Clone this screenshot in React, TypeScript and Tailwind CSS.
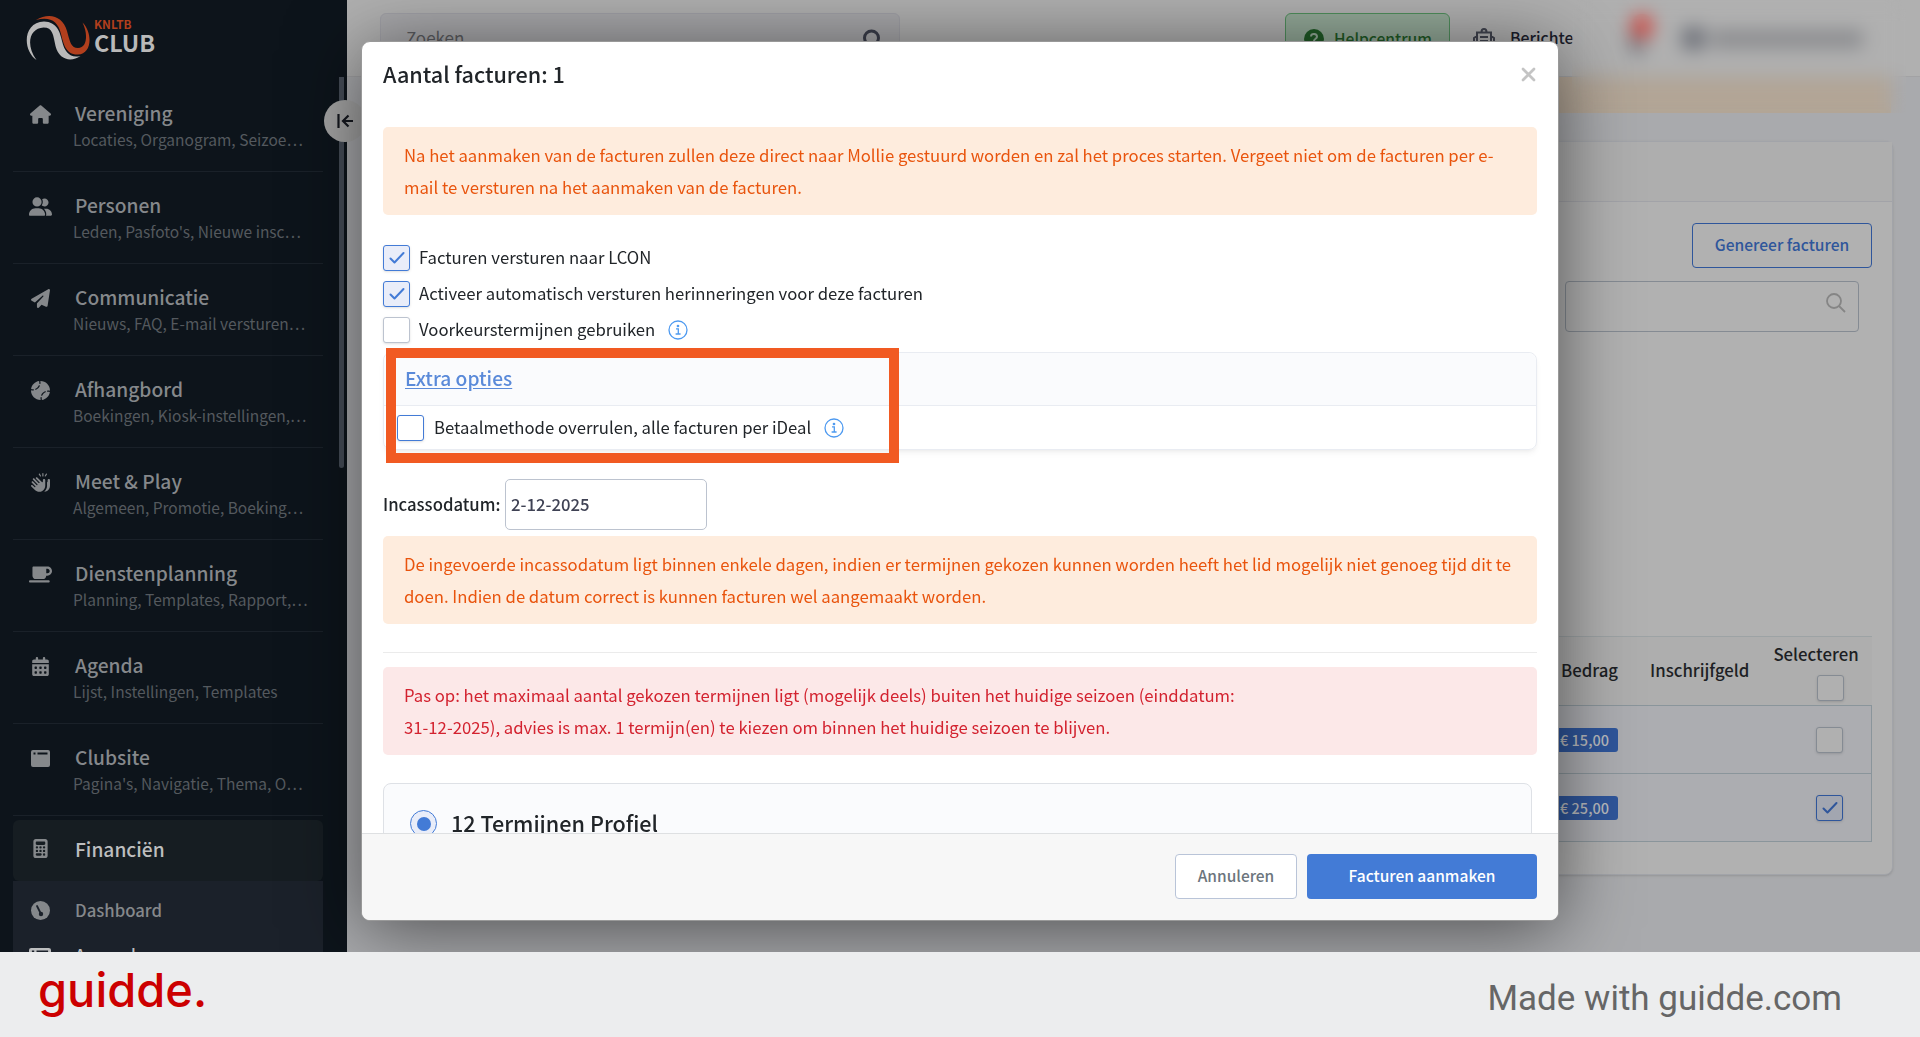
import React from 'react'
import {FaHouse, FaUserGroup, FaPaperPlane, FaBaseball, FaHandsClapping, FaMugSaucer, FaCalendarDays, FaCalculator} from 'react-icons/fa6'

const menu = [
    {title: 'Vereniging', sub: 'Locaties, Organogram, Seizoe…', icon: <FaHouse size={21}/>},
    {title: 'Personen', sub: "Leden, Pasfoto's, Nieuwe insc…", icon: <FaUserGroup size={23}/>},
    {title: 'Communicatie', sub: 'Nieuws, FAQ, E-mail versturen…', icon: <FaPaperPlane size={19}/>},
    {title: 'Afhangbord', sub: 'Boekingen, Kiosk-instellingen,…', icon: <FaBaseball size={19}/>},
    {title: 'Meet & Play', sub: 'Algemeen, Promotie, Boeking…', icon: <FaHandsClapping size={19}/>},
    {title: 'Dienstenplanning', sub: 'Planning, Templates, Rapport,…', icon: <FaMugSaucer size={23}/>},
    {title: 'Agenda', sub: 'Lijst, Instellingen, Templates', icon: <FaCalendarDays size={19}/>},
    {title: 'Clubsite', sub: "Pagina's, Navigatie, Thema, O…", icon: <WindowIcon/>},
]

function WindowIcon({width = 19}: { width?: number }) {
    return (
        <svg width={width} height="17" viewBox="0 0 19 17" fill="currentColor" preserveAspectRatio="none">
            <path fillRule="evenodd" d="M2 0h15a2 2 0 0 1 2 2v13a2 2 0 0 1-2 2H2a2 2 0 0 1-2-2V2a2 2 0 0 1 2-2Zm.5 2.500v2h2v-2Zm4 0v2h10v-2Z"/>
        </svg>
    )
}

const Check = () => (
    <svg width="16" height="14" viewBox="0 0 16 14" fill="none" stroke="currentColor" strokeWidth="2" strokeLinecap="round" strokeLinejoin="round">
        <path d="M1.500 7.500 5.500 11.500 14.500 2"/>
    </svg>
)

const Checkbox = ({checked = false, focus = false}: { checked?: boolean, focus?: boolean }) => (
    <span className={`flex h-[26px] w-[27px] shrink-0 items-center justify-center rounded-[3px] border shadow-sm text-[#437bd6] ${checked ? 'border-[#437bd6] bg-[#e9edf9]' : focus ? 'border-[#437bd6] bg-white' : 'border-[#bcc3cf] bg-white'}`}>
        {checked && <Check/>}
    </span>
)

const DimCheckbox = ({checked = false}: { checked?: boolean }) => (
    <span className={`flex h-[26px] w-[27px] shrink-0 items-center justify-center rounded-[3px] border shadow-sm text-[#2f569b] ${checked ? 'border-[#2f569b] bg-[#a2a6b0]' : 'border-[#858b93] bg-[#b0b0b0]'}`}>
        {checked && <Check/>}
    </span>
)

const Info = () => (
    <svg className="ml-[13px]" width="20" height="20" viewBox="0 0 20 20" fill="none" stroke="#4e9af0" strokeWidth="1.3">
        <circle cx="10" cy="10" r="9"/>
        <path d="M8 8.800h2.300v5M7.600 14h5"/>
        <circle cx="10" cy="6" r=".7" fill="#4e9af0"/>
    </svg>
)

const Sidebar = () => (
    <aside className="relative z-10 w-[347px] shrink-0 bg-[#0d141b]">
        <div className="flex h-[80px] pl-[26px] pt-[15px]">
            <svg width="64" height="46" viewBox="0 0 64 46">
                <path fill="#b9b9b9" d="M10.500 45C-4 35-3 7 18 6.500C31 7 34 17 36 26C38.500 37 44 43.500 54.500 41C45 47.500 33 45 29.500 31C27 20 27 12.500 17.500 12.500C4 13-1 29 10.500 45Z"/>
                <path fill="#b13f1d" d="M10 5C23-3 37 1 41 16C44 27 45 33 52 33C61.500 33 62 18 56.500 7.500C67 18 66 39 52 39.500C40 40 37.500 29 35 19C32 6 24 1.500 10 5Z"/>
            </svg>
            <div className="ml-[4px] flex flex-col">
                <span className="h-[17px] text-[11.800px] leading-[17px] font-bold text-[#b13f1d]">KNLTB</span>
                <span className="text-[23.300px] leading-[21px] font-bold text-[#b9b9b9]">CLUB</span>
            </div>
        </div>
        <nav className="pr-[24px] pl-[13px]">
            {menu.map((item) => (
                <div key={item.title} className="flex h-[92px] border-b border-[#1a2129] text-[#85888b]">
                    <div className="flex w-[54px] shrink-0 justify-center">
                        <div className="flex h-[68px] items-center">{item.icon}</div>
                    </div>
                    <div className="min-w-0 flex-1 pt-[20px] pl-[6px]">
                        <div className="pl-[2px] text-[19.200px] leading-[26px] font-medium">{item.title}</div>
                        <div className="whitespace-nowrap text-[15.500px] leading-[26px] text-[#54595e]">{item.sub}</div>
                    </div>
                </div>
            ))}
            <div className="mt-[4px] flex h-[61px] items-center rounded-md bg-[#161d22] pb-[4px] text-[#85888b]">
                <div className="flex w-[54px] justify-center"><FaCalculator size={19}/></div>
                <span className="pl-[8px] text-[19.200px] leading-[26px] font-medium text-[#bdbebf]">Financiën</span>
            </div>
            <div className="h-[71px] overflow-hidden bg-[#1b212a] text-[#85888b]">
                <div className="flex h-[58px] items-center">
                    <div className="flex w-[54px] justify-center">
                        <svg width="19" height="19" viewBox="0 0 19 19"><circle cx="9.500" cy="9.500" r="9.500" fill="currentColor"/><path d="m6 5 4 8" stroke="#1b212a" strokeWidth="1.800" strokeLinecap="round"/><circle cx="10" cy="13" r="2.200" fill="#1b212a"/></svg>
                    </div>
                    <span className="pl-[8px] text-[16.700px] leading-[24px] font-medium">Dashboard</span>
                </div>
                <div className="flex items-start pt-[4px]">
                    <div className="flex w-[54px] justify-center pt-[5px] text-[#bdbebf]"><WindowIcon width={22}/></div>
                    <span className="pl-[8px] text-[16.700px] leading-[24px] font-medium text-[#bdbebf]">Aanmaken</span>
                </div>
            </div>
        </nav>
        <div className="absolute top-[77px] left-[339px] h-[391px] w-[5px] rounded-b bg-[#454c57]"/>
        <div className="absolute top-[100px] left-[324px] flex size-[42px] items-center justify-center rounded-full bg-[#a5a5a5]">
            <svg width="17" height="14" viewBox="0 0 17 14" fill="none" stroke="#15181f" strokeWidth="2.200"><path d="M1.500 0v14M16 7H6.500M11.500 1.500 6 7l5.500 5.500"/></svg>
        </div>
    </aside>
)

const Topbar = () => (
    <div className="relative flex h-[77px] shrink-0 border-b border-[#a2a2a4] bg-[#b0b0b0] pt-[13px] pl-[33px]">
        <div className="flex h-[51px] w-[520px] items-center justify-between rounded-md border border-[#a0a0a6] bg-[#a8a8ab] pr-[19px] pl-[25px] text-[17px] text-[#5b5c60]">
            <span className="pb-[2px] leading-[24px]">Zoeken</span>
            <svg width="17" height="20" viewBox="0 0 17 20" fill="none" stroke="#3b3e4b" strokeWidth="3"><circle cx="8.500" cy="9" r="7"/></svg>
        </div>
        <div className="ml-[385px] flex h-[51px] w-[165px] items-center rounded-md border border-[#4f8e5c] bg-[#93a998] pl-[18px] text-[#1f5a26]">
            <svg width="20" height="20" viewBox="0 0 20 20"><circle cx="10" cy="10" r="10" fill="#1f5a26"/><path d="M7 7.500c.3-3.500 6-3 6 .3 0 2-3 2-3 4.200M10 13.500v2" stroke="#93a998" strokeWidth="2" fill="none"/></svg>
            <span className="ml-[10px] pb-[1px] text-[15.600px] leading-[24px] font-medium">Helpcentrum</span>
        </div>
        <div className="ml-[23px] flex h-[51px] items-center text-[#1b1d2b]">
            <svg width="22" height="22" viewBox="0 0 22 22" fill="none" stroke="#41444f" strokeWidth="2"><path d="M4 20V4.500h14V20M1 19V10l3-2M21 19V10l-3-2M7 9h8M7 13h8M8.500 4c0-4 5-4 5 0"/></svg>
            <span className="ml-[15px] w-[64px] overflow-hidden pb-[1px] text-[15.800px] leading-[24px] font-medium">Berichten</span>
        </div>
        <div className="absolute top-[24px] left-[1282px] h-[30px] w-[16px] rounded bg-[#7c7e84]"/>
        <div className="absolute top-[14px] left-[1284px] h-[25px] w-[22px] rounded-full bg-[#cc4f49]"/>
        <div className="absolute top-[27px] left-[1335px] size-[23px] rounded bg-[#70737b]"/>
        <div className="absolute top-[30px] left-[1364px] h-[18px] w-[152px] rounded bg-[#8b8c8f]"/>
    </div>
)

const amounts = [
    {amount: '€ 15,00', checked: false},
    {amount: '€ 25,00', checked: true},
]

const Page = () => (
    <main className="relative flex min-w-0 flex-1 flex-col bg-[#a9aaad]">
        <Topbar/>
        <div className="ml-[28px] h-[36px] w-[1516px] bg-[#b2a596]"/>
        {/* Account details are hidden behind frosted glass */}
        <div className="absolute top-0 left-[1225px] h-[113px] w-[334px] backdrop-blur-[9px]"/>
        <div className="mt-[28px] ml-[28px] h-[734px] w-[1518px] rounded-lg border border-[#a2a4a9] bg-[#b1b1b1] shadow-sm">
            <div className="h-[60px] border-b border-[#a2a3a8] bg-[#aeaeae]"/>
            <div className="flex flex-col items-end pr-[20px]">
                <div className="mt-[21px] flex h-[45px] w-[180px] items-center justify-center rounded border border-[#2f569b] pb-[1px] text-[15.600px] font-medium text-[#2f569b]">Genereer facturen</div>
                <div className="mt-[13px] mr-[13px] flex h-[51px] w-[294px] items-start justify-end rounded border border-[#858b93] pt-[11px] pr-[12px]">
                    <svg width="20" height="20" viewBox="0 0 20 20" fill="none" stroke="#858585" strokeWidth="1.800"><circle cx="8" cy="8" r="7"/><path d="m13 13 6 6"/></svg>
                </div>
                <div className="mt-[304px] flex h-[69px] w-[480px] items-center border-t border-[#9da3a5] bg-[#aeaeae] text-[16.800px] font-medium text-[#1d1f24]">
                    <span className="w-[178px] pl-[169px]">Bedrag</span>
                    <span className="ml-[80px]">Inschrijfgeld</span>
                    <div className="ml-[24px] flex w-[90px] flex-col items-end">
                        <span className="w-full pb-[8px] leading-[26px]">Selecteren</span>
                        <span className="mr-[19px]"><DimCheckbox/></span>
                    </div>
                </div>
                {amounts.map((row) => (
                    <div key={row.amount} className="flex h-[68px] w-[480px] items-center justify-between border-t border-r border-[#8a959b] bg-[#acadb1] pr-[28px] last:h-[69px] last:border-b">
                        <span className="ml-[151px] flex h-[24px] w-[75px] items-center justify-end rounded-[3px] bg-[#2f569b] pt-[1px] pr-[9px] text-[14.500px] font-medium text-[#b9bbbf]">{row.amount}</span>
                        <DimCheckbox checked={row.checked}/>
                    </div>
                ))}
            </div>
        </div>
    </main>
)

const Alert = ({children, danger = false}: { children: React.ReactNode, danger?: boolean }) => (
    <div className={`h-[88px] rounded-[5px] px-[21px] py-[12px] text-[16.720px] leading-[32px] whitespace-nowrap ${danger ? 'bg-[#fce8e8] text-[#d3222f]' : 'bg-[#feecdd] text-[#e9540d]'}`}>
        {children}
    </div>
)

const Modal = () => (
    <div className="absolute top-[41px] left-[361px] z-20 flex h-[880px] w-[1198px] flex-col overflow-hidden rounded-[9px] border border-[#999] bg-white text-[16.720px] text-[#212529] shadow-[0_8px_75px_rgba(0,0,0,0.55)]">
        <div className="flex h-[64px] shrink-0 items-center justify-between pr-[22px] pl-[21px]">
            <h1 className="text-[21.600px] leading-[32px] font-medium">Aantal facturen: 1</h1>
            <svg width="15" height="15" viewBox="0 0 15 15" stroke="#c4c4c4" strokeWidth="2.800" strokeLinecap="round"><path d="m2 2 11 11M13 2 2 13"/></svg>
        </div>
        <div className="h-[727px] shrink-0 overflow-hidden pt-[21px] pr-[21px] pl-[21px]">
            <Alert>Na het aanmaken van de facturen zullen deze direct naar Mollie gestuurd worden en zal het proces starten. Vergeet niet om de facturen per e-<br/>mail te versturen na het aanmaken van de facturen.</Alert>
            <div className="mt-[25px] flex flex-col">
                <label className="flex h-[36px] items-center gap-[9px]"><Checkbox checked/>Facturen versturen naar LCON</label>
                <label className="flex h-[36px] items-center gap-[9px]"><Checkbox checked/>Activeer automatisch versturen herinneringen voor deze facturen</label>
                <label className="flex h-[36px] items-center"><Checkbox/><span className="ml-[9px]">Voorkeurstermijnen gebruiken</span><Info/></label>
            </div>
            <div className="relative mt-[4px] h-[98px] rounded-lg border border-[#e9ecf2] shadow-md shadow-black/5">
                <div className="h-[53px] rounded-t-lg border-b border-[#e9ecf2] bg-[#fafbfd] pl-[21px] text-[19.200px] leading-[51px] font-medium text-[#5a8ad9]"><span className="underline underline-offset-2">Extra opties</span></div>
                <label className="flex h-[43px] items-center pl-[13px]"><Checkbox focus/><span className="ml-[10px]">Betaalmethode overrulen, alle facturen per iDeal</span><Info/></label>
                <div className="absolute top-[-5px] left-[2px] h-[115px] w-[513px] border-[10px] border-[#f15a22]"/>
            </div>
            <div className="mt-[29px] flex h-[50px] items-center">
                <span className="w-[122px] pt-[1px] font-medium">Incassodatum:</span>
                <span className="flex h-[51px] w-[202px] items-center rounded-[5px] border border-[#bcc3cf] pt-[1px] pl-[5px] font-medium text-[#3f4254]">2-12-2025</span>
            </div>
            <div className="mt-[7px]">
                <Alert>De ingevoerde incassodatum ligt binnen enkele dagen, indien er termijnen gekozen kunnen worden heeft het lid mogelijk niet genoeg tijd dit te<br/>doen. Indien de datum correct is kunnen facturen wel aangemaakt worden.</Alert>
            </div>
            <hr className="mt-[28px] mb-[14px] border-[#ebebeb]"/>
            <Alert danger>Pas op: het maximaal aantal gekozen termijnen ligt (mogelijk deels) buiten het huidige seizoen (einddatum:<br/>31-12-2025), advies is max. 1 termijn(en) te kiezen om binnen het huidige seizoen te blijven.</Alert>
            <div className="mt-[28px] mr-[5px] flex h-[110px] items-start rounded-lg border border-[#dee1e6] bg-[#fafbfd] pt-[26px] pl-[26px]">
                <span className="flex size-[27px] items-center justify-center rounded-full border border-[#437bd6] bg-[#e9edf9]"><span className="size-[14px] rounded-full bg-[#437bd6]"/></span>
                <span className="ml-[14px] text-[21.600px] leading-[25px] font-medium">12 Termijnen Profiel</span>
            </div>
        </div>
        <div className="flex flex-1 items-center justify-end gap-[10px] border-t border-[#dee0e2] bg-[#f7f7f7] pr-[21px] pb-[2px] text-[15.500px] font-medium">
            <button className="h-[45px] w-[122px] rounded border border-[#b9c4d8] bg-white text-[#6c757d]">Annuleren</button>
            <button className="h-[45px] w-[230px] rounded bg-[#437bd6] text-white">Facturen aanmaken</button>
        </div>
    </div>
)

export default function App() {
    return (
        <div className="h-[1037px] w-[1920px] overflow-hidden bg-[#ecedee] font-['Noto_Sans_CJK_SC',sans-serif]">
            <div className="relative flex h-[952px] overflow-hidden">
                <Sidebar/>
                <Page/>
                <Modal/>
            </div>
            <footer className="flex h-[85px] items-center justify-between pr-[78px] pl-[38px]">
                <span className="pb-[9px] font-['Inter',sans-serif] text-[47px] leading-[60px] font-medium text-[#c00]">guidde.</span>
                <span className="pt-[8px] font-['Roboto',sans-serif] text-[35px] leading-[40px] text-[#666]">Made with guidde.com</span>
            </footer>
        </div>
    )
}
